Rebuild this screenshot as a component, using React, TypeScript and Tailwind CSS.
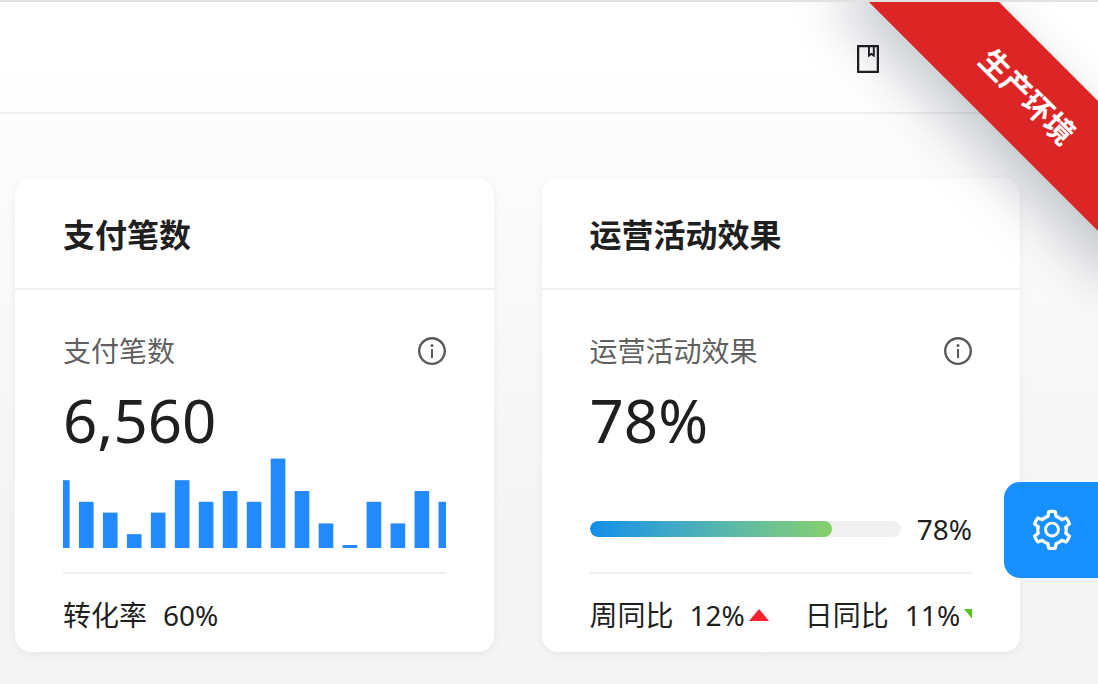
import type { ReactNode } from "react";
import { AiOutlineBook, AiOutlineInfoCircle, AiOutlineSetting } from "react-icons/ai";

const VISITS = [7, 5, 4, 2, 4, 7, 5, 6, 5, 9, 6, 3, 1, 5, 3, 6, 5];

interface ChartCardProps {
  title: string;
  total: string;
  footer: ReactNode;
  children: ReactNode;
}

function ChartCard({ title, total, footer, children }: ChartCardProps) {
  return (
    <section className="min-w-0 rounded-2xl bg-white shadow-[0_2px_8px_rgba(0,0,0,0.06)]">
      <h2 className="border-b-2 border-[#f0f0f0] px-12 pt-[34px] pb-[30px] text-[32px] leading-[46px] font-semibold">
        {title}
      </h2>
      <div className="px-12 pt-10 pb-[14px]">
        <div className="flex h-[42px] items-center justify-between text-[28px] text-black/65">
          <span>{title}</span>
          <button type="button" aria-label={`${title}说明`} className="-mr-0.5">
            <AiOutlineInfoCircle className="size-8" />
          </button>
        </div>
        <p className="mt-2.5 text-[60px] leading-[76px]">{total}</p>
        <div className="flex h-[90px] items-end">{children}</div>
        <div className="mt-6 overflow-hidden border-t-2 border-[#f0f0f0] pt-[18px] text-[28px] leading-[46px] whitespace-nowrap">
          {footer}
        </div>
      </div>
    </section>
  );
}

function MiniColumns({ values }: { values: number[] }) {
  return (
    <svg viewBox="0 0 382 90" preserveAspectRatio="none" className="h-full w-full" fill="#2389ff">
      {values.map((value, i) => {
        const height = 3 + (value - 1) * 10.8;
        return <rect key={i} x={i * 23.94 - 8} y={90 - height} width={14.6} height={height} />;
      })}
    </svg>
  );
}

function Progress({ percent }: { percent: number }) {
  return (
    <div className="flex h-[38px] w-full items-center gap-4">
      <div className="h-4 flex-1 overflow-hidden rounded-full bg-[#f0f0f0]">
        <div
          className="h-full rounded-full bg-linear-to-r from-[#108ee9] to-[#87d068]"
          style={{ width: `${percent}%` }}
        />
      </div>
      <span className="text-[28px]">{percent}%</span>
    </div>
  );
}

interface TrendProps {
  label: string;
  value: string;
  direction: "up" | "down";
}

function Trend({ label, value, direction }: TrendProps) {
  return (
    <span className="flex shrink-0 items-center">
      {label}
      <span className="ml-4">{value}</span>
      <svg viewBox="0 0 20 12" className="ml-1 h-3 w-5">
        {direction === "up" ? (
          <path d="M10 0L20 12H0z" fill="#f5222d" />
        ) : (
          <path d="M0 0H20L10 12z" fill="#52c41a" />
        )}
      </svg>
    </span>
  );
}

export default function App() {
  return (
    <div className="relative min-h-screen overflow-hidden border-t-2 border-[#e1e1e1] bg-linear-to-b from-white to-[#f4f4f4] to-80% font-['Noto_Sans','Noto_Sans_CJK_SC',sans-serif] text-[#1f1f1f]">
      <header className="flex h-28 items-center justify-end border-b-2 border-[#efefef] bg-white/50 pt-1 pr-[214px]">
        <button type="button" aria-label="文档">
          <AiOutlineBook className="size-8" />
        </button>
      </header>

      <main className="grid grid-cols-2 gap-12 pt-16 pr-[78px] pb-8 pl-[15px]">
        <ChartCard
          title="支付笔数"
          total="6,560"
          footer={
            <span>
              转化率<span className="ml-4">60%</span>
            </span>
          }
        >
          <MiniColumns values={VISITS} />
        </ChartCard>
        <ChartCard
          title="运营活动效果"
          total="78%"
          footer={
            <div className="flex gap-9">
              <Trend label="周同比" value="12%" direction="up" />
              <Trend label="日同比" value="11%" direction="down" />
            </div>
          }
        >
          <Progress percent={78} />
        </ChartCard>
      </main>

      <div className="pointer-events-none absolute top-12 -right-[130px] flex h-[92px] w-[400px] rotate-45 items-center justify-center bg-[#dc2626] text-[30px] font-bold text-white shadow-[0_24px_56px_rgba(0,10,40,0.22)]">
        生产环境
      </div>

      <button
        type="button"
        aria-label="设置"
        className="absolute top-[480px] right-0 flex h-24 w-[94px] items-center justify-center rounded-l-2xl bg-[#1890ff] pl-0.5 text-white"
      >
        <AiOutlineSetting className="size-[46px]" />
      </button>
    </div>
  );
}
